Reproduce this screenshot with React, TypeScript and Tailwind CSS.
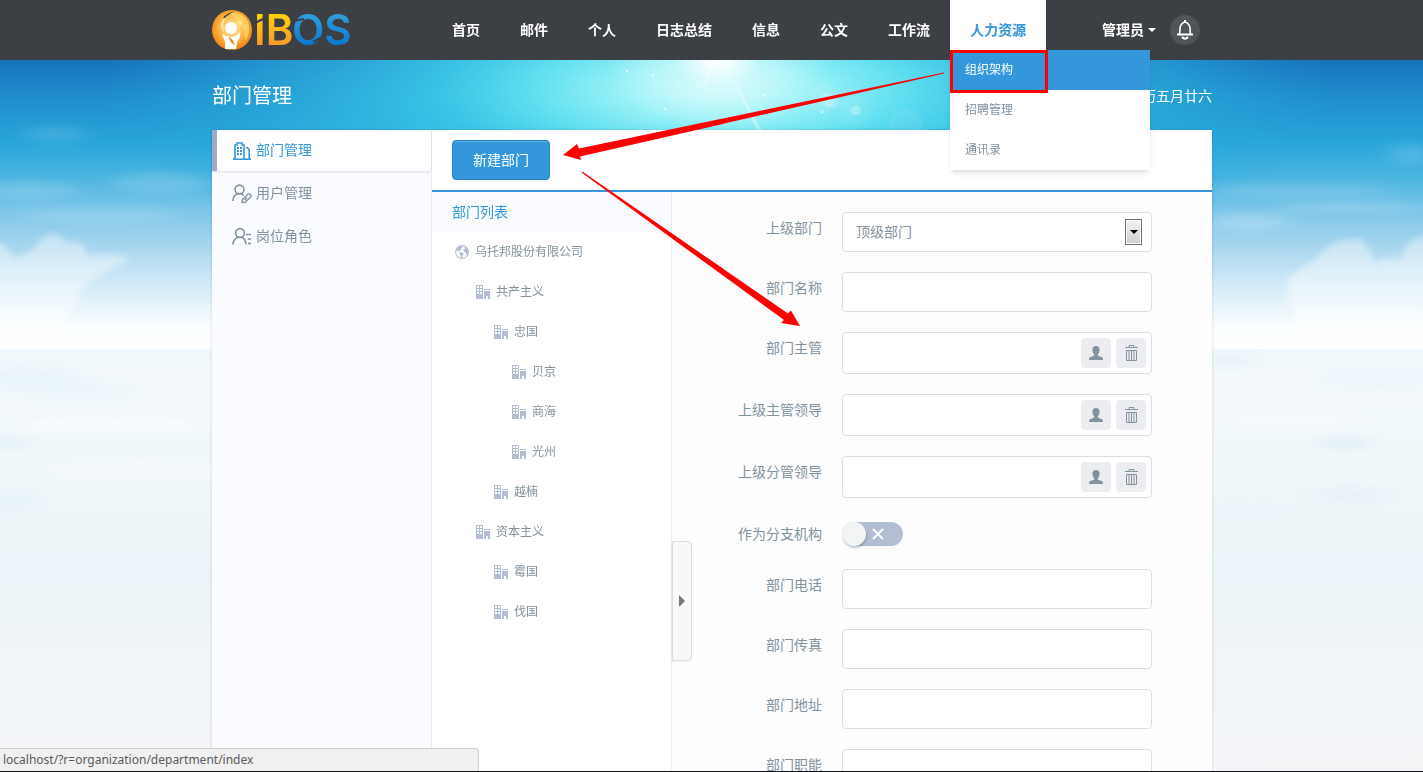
import React, { useState } from "react";
import clsx from "clsx";

const NAV_ITEMS = ["首页", "邮件", "个人", "日志总结", "信息", "公文", "工作流"];

const HR_MENU = ["组织架构", "招聘管理", "通讯录"];

const DEPARTMENTS = [
  { name: "共产主义", level: 1 },
  { name: "忠国", level: 2 },
  { name: "贝京", level: 3 },
  { name: "商海", level: 3 },
  { name: "光州", level: 3 },
  { name: "越楠", level: 2 },
  { name: "资本主义", level: 1 },
  { name: "霉国", level: 2 },
  { name: "伐国", level: 2 },
];

const INDENT = {
  1: "pl-11",
  2: "pl-[62px]",
  3: "pl-20",
};

const Sky = () => (
  <svg
    className="absolute inset-0 w-full h-full"
    viewBox="0 0 1423 772"
    preserveAspectRatio="xMidYMin slice"
    aria-hidden="true"
  >
    <defs>
      <linearGradient id="sky" x1="0" y1="60" x2="0" y2="349" gradientUnits="userSpaceOnUse">
        <stop offset="0" stopColor="#1772bc" />
        <stop offset="0.12" stopColor="#1f8ccb" />
        <stop offset="0.28" stopColor="#27a5da" />
        <stop offset="0.4" stopColor="#48b4e0" />
        <stop offset="0.52" stopColor="#7cc6e9" />
        <stop offset="0.64" stopColor="#a6d5ef" />
        <stop offset="0.78" stopColor="#d3ebf7" />
        <stop offset="0.92" stopColor="#fafdfe" />
        <stop offset="1" stopColor="#ffffff" />
      </linearGradient>
      <linearGradient id="sea" x1="0" y1="349" x2="0" y2="772" gradientUnits="userSpaceOnUse">
        <stop offset="0" stopColor="#eff8fb" />
        <stop offset="0.05" stopColor="#f3f9fc" />
        <stop offset="0.3" stopColor="#f0f7fa" />
        <stop offset="0.53" stopColor="#ebf4f8" />
        <stop offset="0.75" stopColor="#f1f5f8" />
        <stop offset="1" stopColor="#f4f5f7" />
      </linearGradient>
      <radialGradient
        id="glow"
        cx="0"
        cy="0"
        r="1"
        gradientUnits="userSpaceOnUse"
        gradientTransform="translate(718 90) scale(620 190)"
      >
        <stop offset="0" stopColor="#c4f9fc" />
        <stop offset="0.15" stopColor="#9bf2f7" />
        <stop offset="0.3" stopColor="#5fdff0" />
        <stop offset="0.45" stopColor="#3cc9e8" stopOpacity="0.9" />
        <stop offset="0.75" stopColor="#2cb2e0" stopOpacity="0.5" />
        <stop offset="1" stopColor="#27a5da" stopOpacity="0" />
      </radialGradient>
      <radialGradient
        id="sun"
        cx="0"
        cy="0"
        r="1"
        gradientUnits="userSpaceOnUse"
        gradientTransform="translate(718 60) scale(110 70)"
      >
        <stop offset="0" stopColor="#ffffff" />
        <stop offset="0.12" stopColor="#ffffff" stopOpacity="0.85" />
        <stop offset="0.4" stopColor="#ffffff" stopOpacity="0.35" />
        <stop offset="1" stopColor="#ffffff" stopOpacity="0" />
      </radialGradient>
      <linearGradient id="cloud" x1="0" y1="230" x2="0" y2="349" gradientUnits="userSpaceOnUse">
        <stop offset="0" stopColor="#ffffff" stopOpacity="0.4" />
        <stop offset="1" stopColor="#ffffff" stopOpacity="0.5" />
      </linearGradient>
      <filter id="soft" x="-20%" y="-20%" width="140%" height="140%">
        <feGaussianBlur stdDeviation="3" />
      </filter>
      <filter id="softer" x="-50%" y="-100%" width="200%" height="300%">
        <feGaussianBlur stdDeviation="12 4" />
      </filter>
    </defs>

    <rect width="1423" height="350" fill="url(#sky)" />
    <rect y="60" width="1423" height="220" fill="url(#glow)" />
    <rect y="60" width="1423" height="100" fill="url(#sun)" />
    <path d="M722 60 L763 132 L758 132 Z" fill="#ffffff" opacity="0.3" />
    <path d="M716 60 L702 86 L706 86 Z" fill="#ffffff" opacity="0.3" />
    <g fill="#ffffff" opacity="0.7">
      <circle cx="627" cy="71" r="1.2" />
      <circle cx="653" cy="75" r="1.2" />
      <circle cx="698" cy="84" r="1" />
      <circle cx="665" cy="109" r="1.2" />
      <circle cx="764" cy="95" r="1.2" />
      <circle cx="822" cy="112" r="1.2" />
    </g>
    <g fill="#ffffff">
      <circle cx="824" cy="98" r="15" opacity="0.08" />
      <path d="M825 92 l8 3 l1 7 l-5 6 l-8 -3 l-2 -7 Z" opacity="0.2" />
      <path d="M830 96 l10 2 l-2 9 l-9 1 l-4 -6 Z" opacity="0.15" />
      <circle cx="855" cy="112" r="15" opacity="0.06" />
      <path d="M856 105 l5 4 l-2 6 l-7 0 l-2 -6 Z" opacity="0.25" />
      <circle cx="906" cy="125" r="17" opacity="0.06" />
    </g>

    <g fill="#ffffff" filter="url(#softer)">
      <ellipse cx="55" cy="134" rx="30" ry="8" opacity="0.12" />
      <ellipse cx="30" cy="190" rx="50" ry="9" opacity="0.14" />
      <ellipse cx="160" cy="182" rx="50" ry="10" opacity="0.14" />
      <ellipse cx="100" cy="215" rx="80" ry="8" opacity="0.12" />
      <ellipse cx="1300" cy="190" rx="90" ry="6" opacity="0.14" />
      <ellipse cx="1250" cy="222" rx="40" ry="9" opacity="0.2" />
      <ellipse cx="1350" cy="207" rx="70" ry="5" opacity="0.16" />
      <ellipse cx="1410" cy="154" rx="20" ry="12" opacity="0.14" />
    </g>
    <g fill="url(#cloud)" filter="url(#soft)">
      <path d="M-10 240 Q8 244 14 258 Q34 254 42 238 Q56 228 66 242 Q88 240 86 256 Q106 252 132 258 Q108 270 84 286 Q66 320 60 349 L-10 349 Z" />
      <path d="M1305 349 Q1284 300 1288 278 Q1310 264 1324 250 Q1340 236 1362 240 Q1370 250 1374 262 Q1392 254 1400 262 Q1404 236 1430 236 L1430 349 Z" />
    </g>

    <rect y="349" width="1423" height="423" fill="url(#sea)" />
    <g filter="url(#softer)">
      <ellipse cx="20" cy="378" rx="60" ry="12" fill="#e4f2fa" opacity="0.6" />
      <ellipse cx="80" cy="390" rx="50" ry="8" fill="#e6f3f9" opacity="0.5" />
      <ellipse cx="110" cy="425" rx="100" ry="6" fill="#f9fcfe" opacity="0.8" />
      <ellipse cx="10" cy="443" rx="24" ry="4" fill="#dceef5" opacity="0.8" />
      <ellipse cx="140" cy="470" rx="90" ry="7" fill="#f8fbfd" opacity="0.7" />
      <ellipse cx="10" cy="500" rx="26" ry="12" fill="#e3f1f8" opacity="0.6" />
      <ellipse cx="1230" cy="361" rx="30" ry="3" fill="#dff0f5" opacity="0.8" />
      <ellipse cx="1380" cy="378" rx="60" ry="8" fill="#e8f4fb" opacity="0.6" />
      <ellipse cx="1345" cy="443" rx="24" ry="3" fill="#cbe5f1" opacity="0.9" />
      <ellipse cx="1290" cy="420" rx="80" ry="6" fill="#f8fbfd" opacity="0.7" />
      <ellipse cx="1350" cy="495" rx="40" ry="7" fill="#e3f0f9" opacity="0.7" />
      <ellipse cx="1250" cy="510" rx="50" ry="5" fill="#e6f2f7" opacity="0.6" />
    </g>
  </svg>
);

const Logo = () => (
  <svg width="144" height="56" viewBox="0 -8 144 56" role="img" aria-label="IBOS">
    <defs>
      <radialGradient id="ball" cx="0.5" cy="0.45" r="0.55">
        <stop offset="0" stopColor="#ffe9b0" />
        <stop offset="0.55" stopColor="#fdb94a" />
        <stop offset="1" stopColor="#ee860f" />
      </radialGradient>
      <linearGradient id="gold" x1="0" y1="4" x2="0" y2="35" gradientUnits="userSpaceOnUse">
        <stop offset="0" stopColor="#ffd500" />
        <stop offset="1" stopColor="#f7992c" />
      </linearGradient>
      <linearGradient id="azure" x1="0" y1="4" x2="0" y2="35" gradientUnits="userSpaceOnUse">
        <stop offset="0" stopColor="#2f9fdb" />
        <stop offset="1" stopColor="#0b78cf" />
      </linearGradient>
    </defs>
    <circle cx="20" cy="20" r="20" fill="url(#ball)" />
    <path d="M17 3 Q30 0 36 12 Q39 22 33 31 Q34 15 17 3 Z" fill="#fdd46a" opacity="0.8" />
    <path d="M11 8 Q14 3 24 1 Q16 4 13 8 Z" fill="#3c3f44" />
    <path d="M9 18 Q7 10 15 7 Q9 14 13 24 Z" fill="#fff3cf" opacity="0.6" />
    <circle cx="27" cy="13" r="3" fill="#ffe27d" />
    <circle cx="19" cy="18" r="6" fill="#ffffff" />
    <path d="M10 24 Q15 27 20 27 Q25 26 28 22 Q29 27 25 32 L24 39 L13 39 L13 32 Q12 29 10 24 Z" fill="#ffffff" />
    <path d="M17 27 Q21 29 23 35 Q17 32 17 27 Z" fill="#f08c1c" />
    <g className="font-['Inter',sans-serif] font-semibold text-[42px]">
      <text x="42" y="35" fill="url(#gold)">
        IB
      </text>
      <text x="80" y="35" fill="url(#azure)">
        OS
      </text>
    </g>
    <g stroke="#3c3f44" strokeWidth="2" fill="none">
      <path d="M43 13 L53 8" />
      <path d="M81 11 L92 9" />
      <path d="M101 32 L112 26" />
    </g>
  </svg>
);

const BellIcon = () => (
  <svg width="18" height="22" viewBox="0 0 18 22" fill="none" stroke="#fff" strokeWidth="2">
    <path d="M1 15.5 H17" />
    <path d="M3.5 15 Q4 12 4 9 Q4.5 4.5 9 3 Q13.5 4.5 14 9 Q14 12 14.5 15" strokeWidth="1.6" />
    <path d="M9 3 V1" />
    <path d="M6 18 Q9 21.5 12 18" />
  </svg>
);

const BuildingIcon = () => (
  <svg width="20" height="20" viewBox="0 0 20 20" fill="none" stroke="currentColor" strokeWidth="1.6">
    <path d="M1 18.2 H19" />
    <path d="M3 18 V4 H5 V2 H10 V4 H12 V18" />
    <path d="M14 6.8 H15.5 L17.2 9 V18" />
    <g fill="currentColor" stroke="none">
      <path d="M5 6h2v2H5zM8 6h2v2H8zM5 9h2v2H5zM8 9h2v2H8zM5 12h2v2H5zM8 12h2v2H8z" />
    </g>
  </svg>
);

const UserEditIcon = () => (
  <svg width="20" height="20" viewBox="0 0 20 20" fill="none" stroke="currentColor" strokeWidth="1.6">
    <circle cx="7.5" cy="5.5" r="4.4" />
    <path d="M1 17 Q1 11 6 9.8 M9.5 9.8 L11.5 11.5" />
    <path d="M10 18.5 L10.5 15.5 L16 10 Q17.5 9.5 18.5 10.5 Q19.5 12 18.5 13.2 L13 18.3 Z" strokeWidth="1.4" />
    <path d="M12.5 16 L15 13.5" strokeWidth="1.2" />
  </svg>
);

const UserRoleIcon = () => (
  <svg width="20" height="20" viewBox="0 0 20 20" fill="none" stroke="currentColor" strokeWidth="1.6">
    <circle cx="8" cy="6" r="4.4" />
    <path d="M1 17.5 Q1.5 11.5 6.5 10.2 M9.5 10.2 Q13.5 11.5 14 17.5" />
    <path d="M14 7.5 H19 M16 12 H19 M16 16.5 H19" />
  </svg>
);

const GlobeIcon = () => (
  <svg width="14" height="14" viewBox="0 0 14 14" className="text-[#b2bfd3]">
    <circle cx="7" cy="7" r="6.4" fill="none" stroke="currentColor" strokeWidth="1.1" />
    <path
      fill="currentColor"
      d="M1 5 L3.5 1.8 L6.5 1 L7.5 2.5 L6 4 L5.5 5.5 L4 6 L2 6.5 Z M8 5 L10 4 L9.5 2.5 L11 1.8 L13.4 5.5 L12.8 9 L11 9.5 L11 7.5 L9 6.8 Z M4.5 7 L7.5 7.5 L9 9 L7.5 10.5 L7 13 L5.5 12 L5.5 10 L4 8.5 Z"
    />
  </svg>
);

const DeptIcon = () => (
  <svg width="14" height="14" viewBox="0 0 14 14" fill="#b2bfd3" shapeRendering="crispEdges">
    <path
      fillRule="evenodd"
      d="M0 0h7v14H0z M1 1v2h2V1z M4 1v2h2V1z M1 4v2h2V4z M4 4v2h2V4z M1 7v2h2V7z M4 7v2h2V7z"
    />
    <path d="M8 4h6v1H8z M8 6h6v8h-2v-3h-2v3H8z" />
  </svg>
);

const PersonIcon = () => (
  <svg width="14" height="14" viewBox="0 0 14 14" fill="#82939e">
    <path d="M7 0 Q10.6 0 10.6 4 Q10.4 7 8.8 8.3 V9.6 L13.4 11.6 Q14 12.2 14 14 H0 Q0 12.2 0.6 11.6 L5.2 9.6 V8.3 Q3.6 7 3.4 4 Q3.4 0 7 0 Z" />
  </svg>
);

const TrashIcon = () => (
  <svg width="14" height="16" viewBox="0 0 14 16" fill="none" stroke="#82939e">
    <path d="M1 2.5 H14 M5 2.5 V0.5 H10 V2.5" />
    <path d="M2.5 5.5 V15.5 H12.5 V5.5 Z M5 5 V15 M7.5 5 V15 M10 5 V15" />
  </svg>
);

const SIDE_ITEMS = [
  { label: "部门管理", icon: <BuildingIcon />, active: true },
  { label: "用户管理", icon: <UserEditIcon /> },
  { label: "岗位角色", icon: <UserRoleIcon /> },
];

const Header = () => (
  <header className="relative z-20 pl-px bg-[#3c3f44] shrink-0">
    <div className="w-full max-w-[1000px] mx-auto h-15 flex items-center">
      <a href="#" className="block w-[220px]">
        <Logo />
      </a>
      <nav className="flex text-sm font-bold text-white leading-[58px]">
        {NAV_ITEMS.map((item) => (
          <a key={item} href="#" className="px-5 pb-0.5">
            {item}
          </a>
        ))}
        <div className="relative">
          <a href="#" className="block px-5 pb-0.5 bg-white text-[#3497db]">
            人力资源
          </a>
          <ul className="absolute left-0 top-[50px] w-[200px] bg-white shadow-md text-xs font-normal leading-[38px] text-[#82939e]">
            {HR_MENU.map((item, i) => (
              <li key={item}>
                <a href="#" className={clsx("block px-[15px] pb-0.5", i === 0 && "bg-[#3497db] text-white")}>
                  {item}
                </a>
              </li>
            ))}
            <li aria-hidden="true" className="absolute left-0 top-0 w-[98px] h-[43px] border-3 border-[#ff0000]" />
          </ul>
        </div>
      </nav>
      <div className="ml-auto mr-3 flex items-center gap-[14px]">
        <button className="flex items-center gap-1 text-sm font-bold text-white">
          <span className="pb-0.5">管理员</span>
          <span className="border-x-4 border-t-4 border-x-transparent border-t-white" />
        </button>
        <button
          aria-label="消息"
          className="size-[30px] rounded-full bg-[#505357] flex items-center justify-center"
        >
          <BellIcon />
        </button>
      </div>
    </div>
  </header>
);

const Sidebar = () => (
  <aside className="w-[220px] shrink-0 bg-[#f9fbff] border-r border-[#e9edf3] text-sm text-[#82939e]">
    <ul className="flex flex-col gap-0.5">
      {SIDE_ITEMS.map((item) => (
        <li key={item.label}>
          <a
            href="#"
            className={clsx(
              "flex items-center gap-1 h-[41px] pl-[15px] border-l-5",
              item.active
                ? "bg-white border-[#9dabc6] text-[#3497db] shadow-[0_1px_2px_rgba(0,0,0,0.12)]"
                : "border-transparent"
            )}
          >
            {item.icon}
            <span className="pb-[3px]">{item.label}</span>
          </a>
        </li>
      ))}
    </ul>
  </aside>
);

const DepartmentTree = () => (
  <section className="w-60 shrink-0 bg-white border-r border-[#e9edf3]">
    <h2 className="leading-[38px] pb-0.5 pl-5 text-sm text-[#3497db] bg-[#f9fbff]">部门列表</h2>
    <ul className="text-xs text-[#82939e]">
      <li className="flex items-center gap-1.5 h-10 pl-[23px]">
        <GlobeIcon />
        <span className="pb-[3px]">乌托邦股份有限公司</span>
      </li>
      {DEPARTMENTS.map((dept) => (
        <li key={dept.name} className={clsx("flex items-center gap-1.5 h-10", INDENT[dept.level])}>
          <DeptIcon />
          <span className="pb-[3px]">{dept.name}</span>
        </li>
      ))}
    </ul>
  </section>
);

const Field = ({ id, label, children }) => (
  <div className="flex gap-5">
    <label htmlFor={id} className="w-[150px] text-right leading-[31px]">
      {label}
    </label>
    <div className="flex-1">{children}</div>
  </div>
);

const TextField = ({ id, label }) => (
  <Field id={id} label={label}>
    <input id={id} type="text" className="block w-full h-10 px-3 bg-white border border-[#dadfe6] rounded" />
  </Field>
);

const PeopleField = ({ id, label }) => (
  <Field id={id} label={label}>
    <div className="flex items-center gap-[5px] h-[42px] pr-[5px] bg-white border border-[#dadfe6] rounded">
      <input id={id} type="text" className="flex-1 min-w-0 h-full px-3 bg-transparent outline-none" />
      <button
        type="button"
        aria-label="选择人员"
        className="size-[30px] rounded bg-[#ebedf1] flex items-center justify-center"
      >
        <PersonIcon />
      </button>
      <button
        type="button"
        aria-label="清空"
        className="size-[30px] rounded bg-[#ebedf1] flex items-center justify-center"
      >
        <TrashIcon />
      </button>
    </div>
  </Field>
);

const DepartmentForm = () => {
  const [isBranch, setIsBranch] = useState(false);

  return (
    <form className="relative flex-1 pt-5 pr-15 flex flex-col gap-5 bg-[#fdfdfd] text-sm text-[#82939e]">
      <button
        type="button"
        aria-label="展开"
        className="absolute left-0 top-[349px] w-5 h-30 pl-1.5 flex items-center bg-[#f8f8f9] border border-[#d9dde8] rounded-r-sm shadow-xs"
      >
        <span className="border-y-6 border-l-6 border-y-transparent border-l-[#71797f]" />
      </button>

      <Field id="parent" label="上级部门">
        <div className="relative">
          <select
            id="parent"
            className="block w-full h-10 px-[13px] pb-0.5 bg-white border border-[#dadfe6] rounded appearance-none"
          >
            <option>顶级部门</option>
          </select>
          <span className="absolute right-[10px] top-[7px] w-[17px] h-[26px] flex items-center justify-center border border-[#707070] bg-linear-to-b from-[#f4f4f4] to-[#cfcfcf] shadow-[inset_0_0_0_1px_#fcfcfc] pointer-events-none">
            <span className="border-x-4 border-t-4 border-x-transparent border-t-black" />
          </span>
        </div>
      </Field>
      <TextField id="name" label="部门名称" />
      <PeopleField id="manager" label="部门主管" />
      <PeopleField id="leader" label="上级主管领导" />
      <PeopleField id="sub-leader" label="上级分管领导" />
      <Field id="branch" label="作为分支机构">
        <div className="relative w-[61px] h-6 mt-1">
          <input
            id="branch"
            type="checkbox"
            checked={isBranch}
            onChange={() => setIsBranch(!isBranch)}
            className="block w-full h-full rounded-full bg-[#b2bfd3] appearance-none checked:bg-[#3497db]"
          />
          <span
            className={clsx(
              "absolute top-0 size-6 rounded-full bg-[#f3f4f4] shadow-[1px_2px_2px_rgba(80,95,120,0.35)] pointer-events-none",
              isBranch ? "right-0" : "left-0"
            )}
          />
          {!isBranch && (
            <svg
              className="absolute left-[30px] top-1.5 pointer-events-none"
              width="12"
              height="12"
              viewBox="0 0 12 12"
              stroke="#fff"
              strokeWidth="2"
            >
              <path d="M1 1 L11 11 M11 1 L1 11" />
            </svg>
          )}
        </div>
      </Field>
      <TextField id="phone" label="部门电话" />
      <TextField id="fax" label="部门传真" />
      <TextField id="address" label="部门地址" />
      <TextField id="function" label="部门职能" />
    </form>
  );
};

// Red guide arrows: menu entry -> create button -> manager field
const GuideArrows = () => (
  <svg
    className="absolute left-0 top-0 pointer-events-none"
    width="1000"
    height="340"
    viewBox="0 0 1000 340"
    fill="#ff0000"
    aria-hidden="true"
  >
    <path d="M732 72.5 L367 148.5 L365 144 L351 155 L369 160 L368 156.5 L732 73.5 Z" />
    <path d="M370 172 L371 172 L576 313.5 L579 310.5 L588 326 L569 323 L572 320 L369.5 172.5 Z" />
  </svg>
);

const App = () => {
  return (
    <div className="relative h-screen flex flex-col overflow-hidden font-['Noto_Sans_CJK_SC',sans-serif]">
      <Sky />
      <Header />

      <div className="relative flex-1 pl-px flex flex-col">
        <div className="w-full max-w-[1000px] mx-auto flex-1 flex flex-col">
          <div className="h-[70px] shrink-0 flex items-center justify-between text-white">
            <h1 className="text-xl">部门管理</h1>
            <span className="text-sm">农历五月廿六</span>
          </div>
          <main className="flex-1 flex bg-white shadow-[0_0_3px_rgba(0,0,0,0.15)]">
            <Sidebar />
            <div className="flex-1 flex flex-col">
              <div className="h-[62px] shrink-0 flex items-start px-5 pt-[10px] bg-white border-b-2 border-[#3497db]">
                <button className="h-10 px-5 pb-0.5 text-sm text-white bg-[#3497db] border border-[#2381c4] rounded shadow-[inset_0_1px_0_#5fb0e6]">
                  新建部门
                </button>
              </div>
              <div className="flex-1 flex">
                <DepartmentTree />
                <DepartmentForm />
              </div>
            </div>
          </main>
        </div>
      </div>

      <div className="absolute inset-x-0 top-0 z-30 pl-px pointer-events-none">
        <div className="relative w-full max-w-[1000px] mx-auto">
          <GuideArrows />
        </div>
      </div>

      <div className="absolute inset-x-0 bottom-0 z-30 border-b border-[#15151f]">
        <div className="w-[479px] h-[23px] pl-[3px] leading-[22px] text-xs text-[#5a5a5a] font-['Noto_Sans',sans-serif] bg-[#f0f0f0] border-t border-r border-[#cfcfcf] rounded-tr">
          localhost/?r=organization/department/index
        </div>
      </div>
    </div>
  );
};

export default App;
